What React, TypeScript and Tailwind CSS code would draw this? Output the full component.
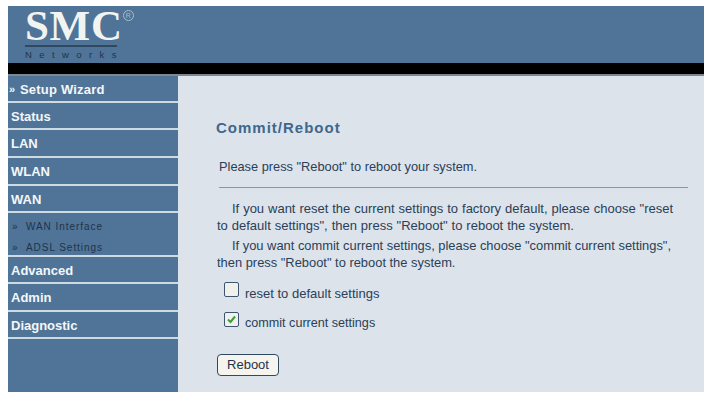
const menuTop = [
  { label: "Status", h: "h-[27px]" },
  { label: "LAN", h: "h-[28px]" },
  { label: "WLAN", h: "h-[28px]" },
  { label: "WAN", h: "h-[27px]" },
];

const menuBottom = [
  { label: "Advanced", h: "h-[27px]" },
  { label: "Admin", h: "h-[28px]" },
  { label: "Diagnostic", h: "h-[27px]" },
];

function MenuItem({ label, className = "h-[28px]" }: { label: string; className?: string }) {
  return (
    <div className={`flex items-center border-b-2 border-[#cfdbe3] pt-[2px] pl-[3px] text-[13px] font-bold text-[#f4f7f9] ${className}`}>
      {label}
    </div>
  );
}

function Logo() {
  return (
    <div className="ml-[17px] flex w-[110px] flex-col pt-[1px]">
      <div className="flex items-start">
        <span className="font-['Liberation_Serif',serif] text-[43px] leading-[38px] font-bold tracking-[0.7px] text-[#f2f4f2]">SMC</span>
        <span className="mt-[3px] flex h-[11px] w-[11px] shrink-0 items-center justify-center rounded-full border border-[#a9bccb] text-[7px] leading-none text-[#a9bccb]">R</span>
      </div>
      <div className="h-[2px] w-[92px] bg-[#2f4a60]" />
      <div className="mt-[2px] text-[9.5px] leading-[11px] tracking-[7.4px] whitespace-nowrap text-[#20344a]">Networks</div>
    </div>
  );
}

export default function App() {
  return (
    <div className="h-[400px] w-[712px] bg-white pt-[6px] pr-[8px] pb-[8px] pl-[8px] font-['Liberation_Sans',Arial,sans-serif]">
      <div className="flex h-[386px] flex-col bg-[#dce3ea]">
        <div className="h-[57px] bg-[#4f7498]">
          <Logo />
        </div>
        <div className="h-[13px] border-b-2 border-[#7d8791] bg-black" />
        <div className="flex min-h-0 flex-1">
          <div className="flex w-[170px] flex-col bg-[#4f7498]">
            <MenuItem
              label="Setup Wizard"
              className="h-[27px] !pl-[12px] tracking-[0.2px] before:absolute before:ml-[-11px] before:text-[11px] before:content-['»']"
            />
            {menuTop.map((item) => (
              <MenuItem key={item.label} label={item.label} className={item.h} />
            ))}
            <div className="flex h-[44px] flex-col border-b-2 border-[#cfdbe3] pl-[4px] text-[10px] text-[#1f3348]">
              <div className="flex h-[21px] items-center pt-[5px] tracking-[0.95px]">» &nbsp;WAN Interface</div>
              <div className="flex h-[21px] items-center pt-[5px] tracking-[0.95px]">» &nbsp;ADSL Settings</div>
            </div>
            {menuBottom.map((item) => (
              <MenuItem key={item.label} label={item.label} className={item.h} />
            ))}
          </div>
          <div className="flex flex-1 flex-col pt-[42px] pr-[16px] pl-[38px] text-[12.9px] text-[#2a4058]">
            <h1 className="text-[15px] leading-[20px] font-bold tracking-[1px] text-[#40678c]">Commit/Reboot</h1>
            <p className="mt-[21px] ml-[3px] text-[12.8px] leading-[16px]">Please press "Reboot" to reboot your system.</p>
            <hr className="mt-[12px] ml-[3px] border-t border-[#8a96a6]" />
            <p className="mt-[12px] ml-[1px] pr-[10px] text-[13px] leading-[17px] indent-[15px] [word-spacing:0.3px]">
              If you want reset the current settings to factory default, please choose "reset to default settings", then press "Reboot" to reboot the system.
            </p>
            <p className="mt-[3px] ml-[1px] pr-[10px] leading-[17px] indent-[15px]">
              If you want commit current settings, please choose "commit current settings", then press "Reboot" to reboot the system.
            </p>
            <div className="mt-[9px] ml-[8px] flex h-[18px] items-center gap-[6px]">
              <span className="h-[15px] w-[15px] rounded-[2px] border border-[#3c5570] bg-[#f1f0ec]" />
              <span className="pt-[9px] text-[13px]">reset to default settings</span>
            </div>
            <div className="mt-[12px] ml-[8px] flex h-[18px] items-center gap-[6px]">
              <span className="flex h-[15px] w-[15px] items-center justify-center rounded-[2px] border border-[#3c5570] bg-[#f1f0ec]">
                <svg width="11" height="11" viewBox="0 0 11 11" fill="none">
                  <path d="M2 5.5 L4.5 8 L9 2.5" stroke="#3f9a3c" strokeWidth="2" />
                </svg>
              </span>
              <span className="pt-[9px] text-[12.6px]">commit current settings</span>
            </div>
            <button className="mt-[26px] ml-[1px] h-[22px] w-[62px] rounded-[4px] border border-[#2f4a60] bg-[#f5f4ef] text-[13px] text-[#1f3348]">
              Reboot
            </button>
          </div>
        </div>
      </div>
    </div>
  );
}
